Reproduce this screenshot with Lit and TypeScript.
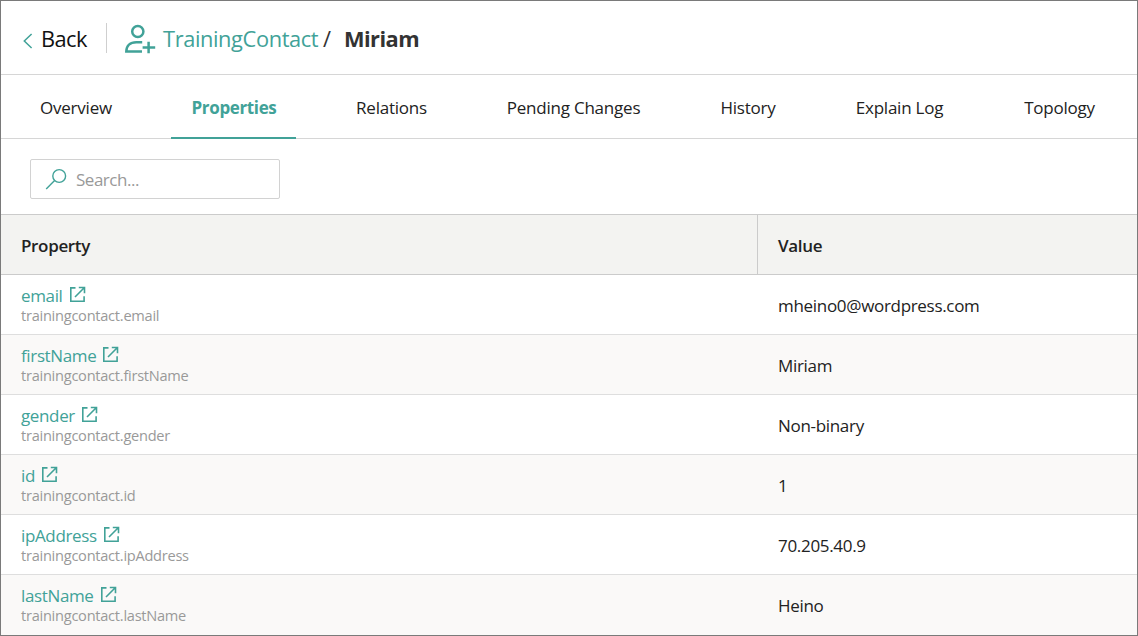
import { LitElement, html, css, svg } from "lit";
import { customElement, property, state } from "lit/decorators.js";
import { classMap } from "lit/directives/class-map.js";

interface PropertyRow {
  name: string;
  value: string;
}

const TABS = ["Overview", "Properties", "Relations", "Pending Changes", "History", "Explain Log", "Topology"];

const ROWS: PropertyRow[] = [
  { name: "email", value: "mheino0@wordpress.com" },
  { name: "firstName", value: "Miriam" },
  { name: "gender", value: "Non-binary" },
  { name: "id", value: "1" },
  { name: "ipAddress", value: "70.205.40.9" },
  { name: "lastName", value: "Heino" },
];

@customElement("page-header")
class PageHeader extends LitElement {
  @property() entity = "";
  @property() name = "";

  static styles = css`
    :host {
      display: flex;
      align-items: center;
      box-sizing: border-box;
      height: 74px;
      padding: 0 0 0 20px;
      border-bottom: 1px solid #d6d6d6;
      font-size: 21.8px;
      line-height: 30px;
      white-space: nowrap;
    }
    svg { display: block; flex: none; fill: none; stroke: #41a298; }
    .chevron { margin-top: 7px; }
    .back { width: 47px; margin-left: 8px; color: #111; letter-spacing: -0.55px; }
    .divider { width: 1px; height: 30px; margin: 1px 18px 0 18px; background: #cfcfcf; }
    .contact { margin-top: 3px; }
    .entity { width: 156px; margin-left: 7px; color: #41a298; letter-spacing: -0.38px; }
    .slash { width: 10px; margin-left: 4px; color: #333; }
    .name { margin-left: 11px; font-weight: 700; color: #333; letter-spacing: -0.55px; }
    .back, .entity, .slash, .name { margin-top: 2px; }
  `;

  render() {
    return html`
      <svg class="chevron" width="12" height="16" viewBox="0 0 12 16" stroke-width="1.5">
        <path d="M10.6 1 3.3 8l7.3 7" />
      </svg>
      <span class="back">Back</span>
      <span class="divider"></span>
      <svg class="contact" width="31" height="30" viewBox="0 0 31 30" stroke-width="2.5">
        <circle cx="12.8" cy="7.5" r="5.6" />
        <path d="M17.2 18.2H11.3C5.3 18.2 1.3 21.6 1.3 27.6H17M23.6 17.8V29.3M17.6 23.4H30.2" />
      </svg>
      <span class="entity">${this.entity}</span>
      <span class="slash">/</span>
      <span class="name">${this.name}</span>
    `;
  }
}

@customElement("tab-bar")
class TabBar extends LitElement {
  @state() private active = 1;

  static styles = css`
    :host {
      display: grid;
      grid-template-columns: 111px 125px 110px 174px 95px 128px 112px;
      column-gap: 40px;
      box-sizing: border-box;
      height: 64px;
      padding-left: 19px;
      border-bottom: 1px solid #d6d6d6;
    }
    .tab {
      height: 64px;
      box-sizing: border-box;
      padding-left: 1px;
      text-align: center;
      line-height: 66px;
      white-space: nowrap;
      cursor: pointer;
      letter-spacing: -0.22px;
      border-bottom: 2px solid transparent;
    }
    .active { color: #41a298; font-weight: 700; letter-spacing: -0.36px; border-color: #41a298; }
  `;

  render() {
    return TABS.map(
      (t, i) => html`<div class=${classMap({ tab: true, active: i === this.active })} @click=${() => (this.active = i)}>${t}</div>`
    );
  }
}

@customElement("search-box")
class SearchBox extends LitElement {
  static styles = css`
    :host {
      display: flex;
      align-items: center;
      box-sizing: border-box;
      width: 250px;
      height: 40px;
      padding-left: 14px;
      border: 1px solid #d2d2d2;
      border-radius: 2px;
      background: #fff;
    }
    svg { display: block; flex: none; fill: none; stroke: #41a298; }
    input {
      width: 180px;
      margin-left: 9px;
      padding: 0;
      border: 0;
      outline: 0;
      background: none;
      font: inherit;
      letter-spacing: -0.48px;
      color: #222;
    }
    input::placeholder { color: #999; opacity: 1; }
  `;

  render() {
    return html`
      <svg width="22" height="22" viewBox="0 0 22 22" stroke-width="1.4">
        <circle cx="14.2" cy="8" r="6.4" />
        <path d="M9.6 12.6 1.2 21" />
      </svg>
      <input placeholder="Search..." />
    `;
  }
}

const openIcon = svg`<path d="M6.5 1.9H1.8V15.2H15.1V10.2M9.8 1.5H15.5V7.2M15.2 1.8 6 11" />`;

@customElement("property-table")
class PropertyTable extends LitElement {
  static styles = css`
    :host { display: block; border-top: 1px solid #cbcbcb; }
    .row {
      display: grid;
      grid-template-columns: 756px 1fr;
      box-sizing: border-box;
      height: 60px;
      border-bottom: 1px solid #dedede;
      background: #fff;
    }
    .row:nth-child(odd) { background: #faf9f8; }
    .row.head { background: #f3f3f1; border-color: #cbcbcb; font-weight: 600; color: #222; letter-spacing: -0.34px; }
    .row:last-child { border-bottom: 0; }
    .head > div { height: 59px; line-height: 61px; padding-left: 20px; }
    .head > div + div { border-left: 1px solid #cbcbcb; }
    .prop { padding: 9px 0 0 20px; }
    .title { display: flex; align-items: flex-start; gap: 6px; height: 22px; line-height: 23px; color: #41a298; letter-spacing: -0.36px; }
    svg { display: block; fill: none; stroke: #41a298; margin-top: 2px; }
    .path { font-size: 14.6px; line-height: 18px; color: #999; letter-spacing: -0.26px; }
    .value { padding-left: 21px; line-height: 62px; letter-spacing: -0.31px; }
  `;

  render() {
    return html`
      <div class="row head"><div>Property</div><div>Value</div></div>
      ${ROWS.map(
        (r) => html`
          <div class="row">
            <div class="prop">
              <div class="title">
                <span>${r.name}</span>
                <svg width="17" height="17" viewBox="0 0 17 17" stroke-width="1.6">${openIcon}</svg>
              </div>
              <div class="path">trainingcontact.${r.name}</div>
            </div>
            <div class="value">${r.value}</div>
          </div>
        `
      )}
    `;
  }
}

@customElement("app-root")
class AppRoot extends LitElement {
  static styles = css`
    :host {
      display: block;
      box-sizing: border-box;
      width: 1138px;
      height: 636px;
      overflow: hidden;
      border: 1px solid #7a7a7a;
      background: #fff;
      color: #222;
      font: 400 17px "Open Sans", "Noto Sans", sans-serif;
    }
    .toolbar { padding: 20px 0 15px 29px; }
  `;

  render() {
    return html`
      <page-header entity="TrainingContact" name="Miriam"></page-header>
      <tab-bar></tab-bar>
      <div class="toolbar"><search-box></search-box></div>
      <property-table></property-table>
    `;
  }
}
